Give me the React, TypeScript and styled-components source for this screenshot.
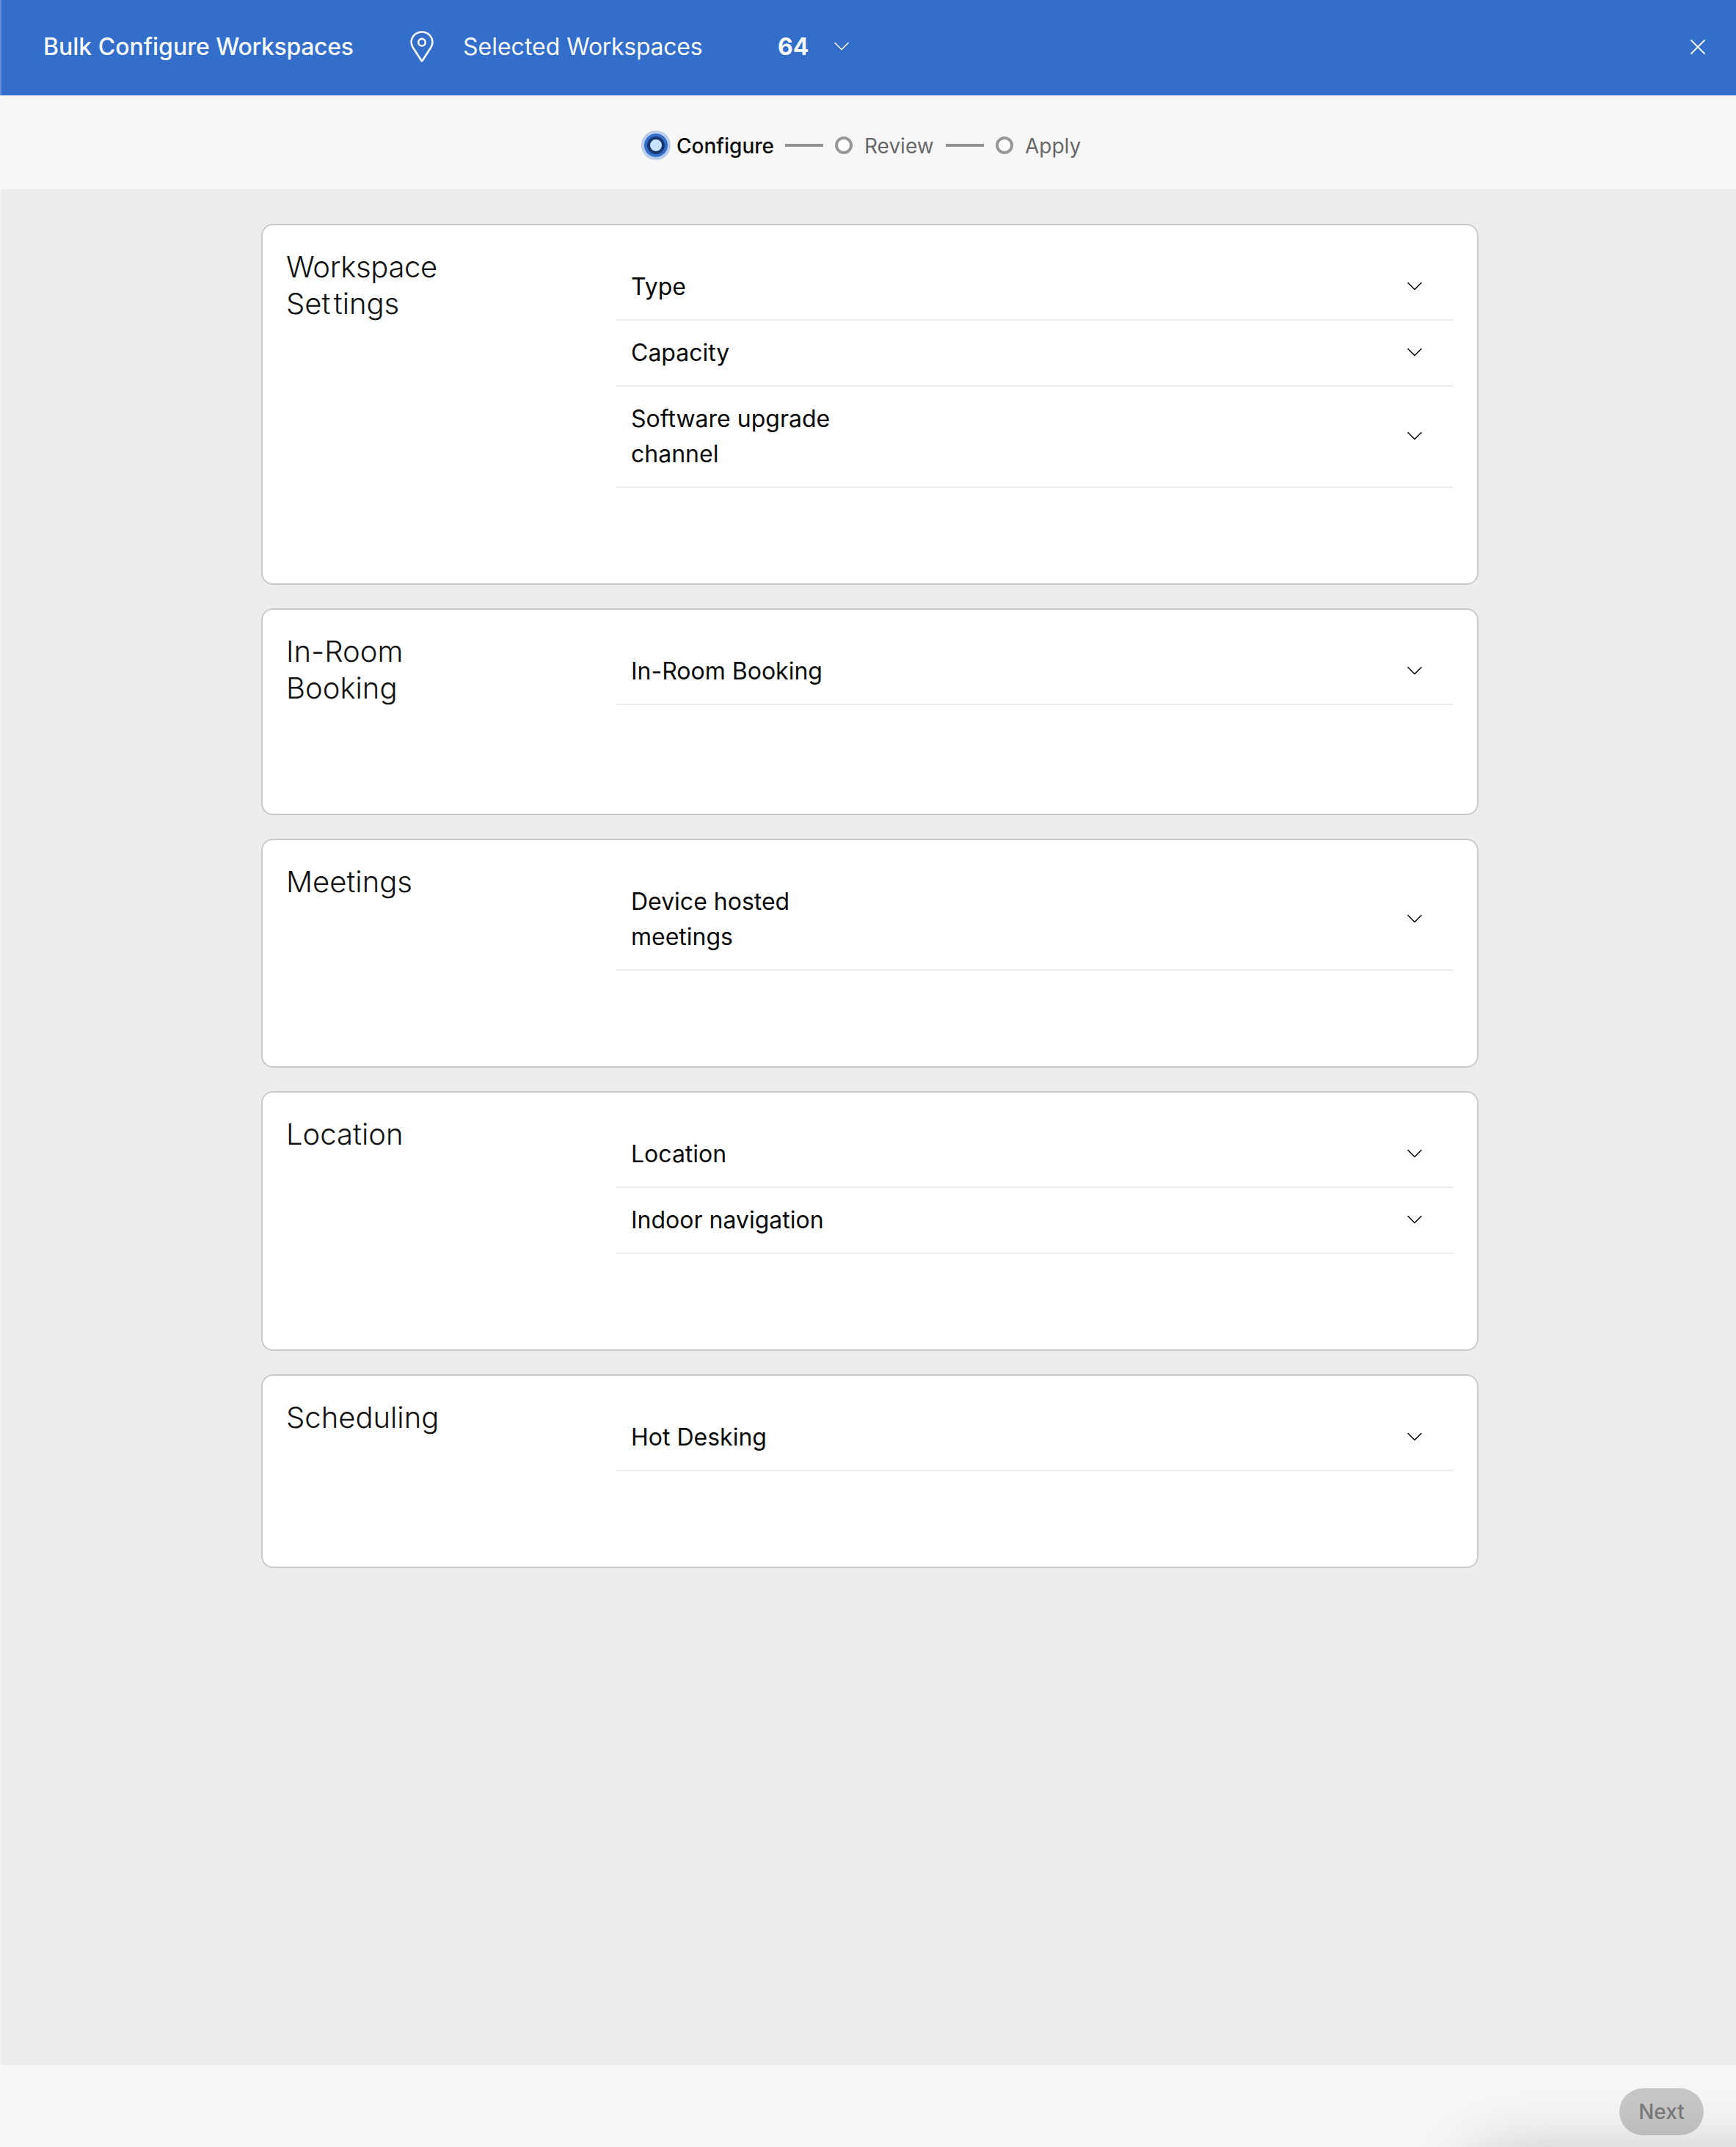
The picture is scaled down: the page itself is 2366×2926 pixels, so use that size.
import React, { type ReactNode } from "react";
import styled, { createGlobalStyle, css } from "styled-components";

const GlobalStyle = createGlobalStyle`
  * { box-sizing: border-box; }
  body {
    margin: 0;
    background: #ededed;
    font-family: Inter, "Liberation Sans", sans-serif;
    -webkit-font-smoothing: antialiased;
  }
`;

const Page = styled.div`
  display: flex;
  flex-direction: column;
  height: 2926px;
  width: 2366px;
  position: relative;
  overflow: hidden;
`;

const WindowEdge = styled.div`
  position: absolute;
  left: 0;
  top: 0;
  bottom: 0;
  width: 2px;
  background: rgba(255, 255, 255, 0.22);
`;

const Header = styled.header`
  display: flex;
  align-items: center;
  height: 130px;
  padding: 0 42px 2px 59px;
  background: #326eca;
  color: #f5f8fd;
  font-size: 32px;
  line-height: 48px;
`;

const HeaderTitle = styled.h1`
  margin: 0;
  width: 500px;
  font: inherit;
  font-weight: 500;
  white-space: nowrap;
`;

const HeaderLabel = styled.span`
  width: 429px;
  margin-left: 40px;
  white-space: nowrap;
`;

const HeaderCount = styled.span`
  width: 75px;
  font-weight: 700;
`;

const Tracked = styled.span<{ $by: number }>`
  letter-spacing: ${(p) => p.$by}px;
`;

const CloseButton = styled.button`
  display: flex;
  margin-left: auto;
  padding: 0;
  border: 0;
  background: none;
  color: inherit;
`;

const StepperBar = styled.nav`
  display: flex;
  align-items: center;
  height: 128px;
  padding: 8px 0 0 874px;
  background: #f7f7f7;
  font-size: 28px;
  line-height: 40px;
`;

const Step = styled.div<{ $active?: boolean; $width: number }>`
  display: flex;
  align-items: center;
  gap: ${(p) => (p.$active ? 8 : 16)}px;
  width: ${(p) => p.$width}px;
  color: ${(p) => (p.$active ? "#0d0d0d" : "#686868")};
  font-weight: ${(p) => (p.$active ? 500 : 400)};
  white-space: nowrap;
`;

const StepLabel = styled.span`
  padding-top: 2px;
`;

const Dot = styled.span<{ $active?: boolean }>`
  flex: none;
  width: 24px;
  height: 24px;
  border-radius: 50%;
  ${(p) =>
    p.$active
      ? css`
          margin: 8px;
          border: 4px solid #17356f;
          background: #c7e2ff;
          box-shadow: 0 0 0 4px #326eca, 0 0 0 8px #b9cdea;
        `
      : css`
          border: 4px solid #979797;
          background: #fff;
        `}
`;

const Connector = styled.span`
  width: 52px;
  height: 4px;
  margin-right: 16px;
  background: #929292;
`;

const Content = styled.main`
  flex: 1;
  display: flex;
  flex-direction: column;
  gap: 32px;
  padding: 47px 351px 0 356px;
`;

const Card = styled.section`
  display: flex;
  width: 1659px;
  min-height: 264px;
  padding: 32px 32px 130px;
  border: 2px solid #cacaca;
  border-radius: 16px;
  background: #fff;
`;

const CardTitle = styled.h2`
  margin: 0 0 16px;
  width: 240px;
  color: #121212;
  font-size: 40px;
  font-weight: 300;
  line-height: 50px;
`;

const RowList = styled.div`
  width: 1141px;
  margin-left: auto;
  padding-top: 8px;
`;

const Row = styled.div`
  display: flex;
  align-items: center;
  justify-content: space-between;
  padding: 20px 41px 20px 20px;
  border-bottom: 2px solid #ececec;
  color: #0a0a0a;
`;

const RowLabel = styled.span`
  width: 300px;
  font-size: 32px;
  line-height: 48px;
`;

const Footer = styled.footer`
  display: flex;
  justify-content: flex-end;
  height: 112px;
  padding: 32px 44px 0 0;
  background: #f7f7f7;
`;

const NextButton = styled.button`
  width: 115px;
  height: 64px;
  padding: 0;
  border: 0;
  border-radius: 32px;
  background: #c8c8c8;
  color: #7b7b7b;
  font-family: inherit;
  font-size: 28px;
  font-weight: 500;
`;

const WindowShadow = styled.div`
  position: absolute;
  left: 2010px;
  right: -200px;
  top: calc(100% + 18px);
  height: 300px;
  box-shadow: 0 0 100px rgba(0, 0, 0, 0.26);
`;

const Icon = styled.svg`
  display: block;
  flex: none;
  fill: none;
  stroke: currentColor;
  stroke-linecap: round;
  stroke-linejoin: round;
`;

const PinIcon = () => (
  <Icon width="32" height="44" viewBox="0 0 32 44" strokeWidth="2.6">
    <path d="M16 41.2 Q15.6 41.2 15.1 40.3 L3.3 22 C1.9 19.4 1.6 17.5 1.6 15.6 A14.4 14.1 0 0 1 30.4 15.6 C30.4 17.5 30.1 19.4 28.7 22 L16.9 40.3 Q16.4 41.2 16 41.2Z" />
    <circle cx="16" cy="15.7" r="4.8" />
  </Icon>
);

const Chevron = () => (
  <Icon width="24" height="14" viewBox="0 0 24 14" strokeWidth="1.6">
    <path d="M3 1.5 L12 10.5 L21 1.5" />
  </Icon>
);

const CloseIcon = () => (
  <Icon width="20" height="20" viewBox="0 0 20 20" strokeWidth="1.8">
    <path d="M1 1 L19 19 M19 1 L1 19" />
  </Icon>
);

const sections: { id: string; title: ReactNode; rows: string[] }[] = [
  {
    id: "workspace",
    title: (
      <>
        <Tracked $by={-0.33}>Workspace</Tracked> Se<Tracked $by={4.3}>t</Tracked>tings
      </>
    ),
    rows: ["Type", "Capacity", "Software upgrade channel"],
  },
  { id: "booking", title: "In-Room Booking", rows: ["In-Room Booking"] },
  { id: "meetings", title: "Meetings", rows: ["Device hosted meetings"] },
  { id: "location", title: "Location", rows: ["Location", "Indoor navigation"] },
  { id: "scheduling", title: "Scheduling", rows: ["Hot Desking"] },
];

export default function App() {
  return (
    <Page>
      <GlobalStyle />
      <Header>
        <HeaderTitle>
          Bulk Configure <Tracked $by={-0.32}>Workspaces</Tracked>
        </HeaderTitle>
        <PinIcon />
        <HeaderLabel>
          Selected <Tracked $by={-0.28}>Workspaces</Tracked>
        </HeaderLabel>
        <HeaderCount>64</HeaderCount>
        <Chevron />
        <CloseButton aria-label="Close">
          <CloseIcon />
        </CloseButton>
      </Header>
      <StepperBar>
        <Step $active $width={196}>
          <Dot $active />
          <StepLabel>Configure</StepLabel>
        </Step>
        <Connector />
        <Step $width={151}>
          <Dot />
          <StepLabel>Review</StepLabel>
        </Step>
        <Connector />
        <Step $width={130}>
          <Dot />
          <StepLabel>Apply</StepLabel>
        </Step>
      </StepperBar>
      <Content>
        {sections.map((section) => (
          <Card key={section.id}>
            <CardTitle>{section.title}</CardTitle>
            <RowList>
              {section.rows.map((row) => (
                <Row key={row}>
                  <RowLabel>{row}</RowLabel>
                  <Chevron />
                </Row>
              ))}
            </RowList>
          </Card>
        ))}
      </Content>
      <Footer>
        <NextButton disabled>Next</NextButton>
      </Footer>
      <WindowShadow />
      <WindowEdge />
    </Page>
  );
}
